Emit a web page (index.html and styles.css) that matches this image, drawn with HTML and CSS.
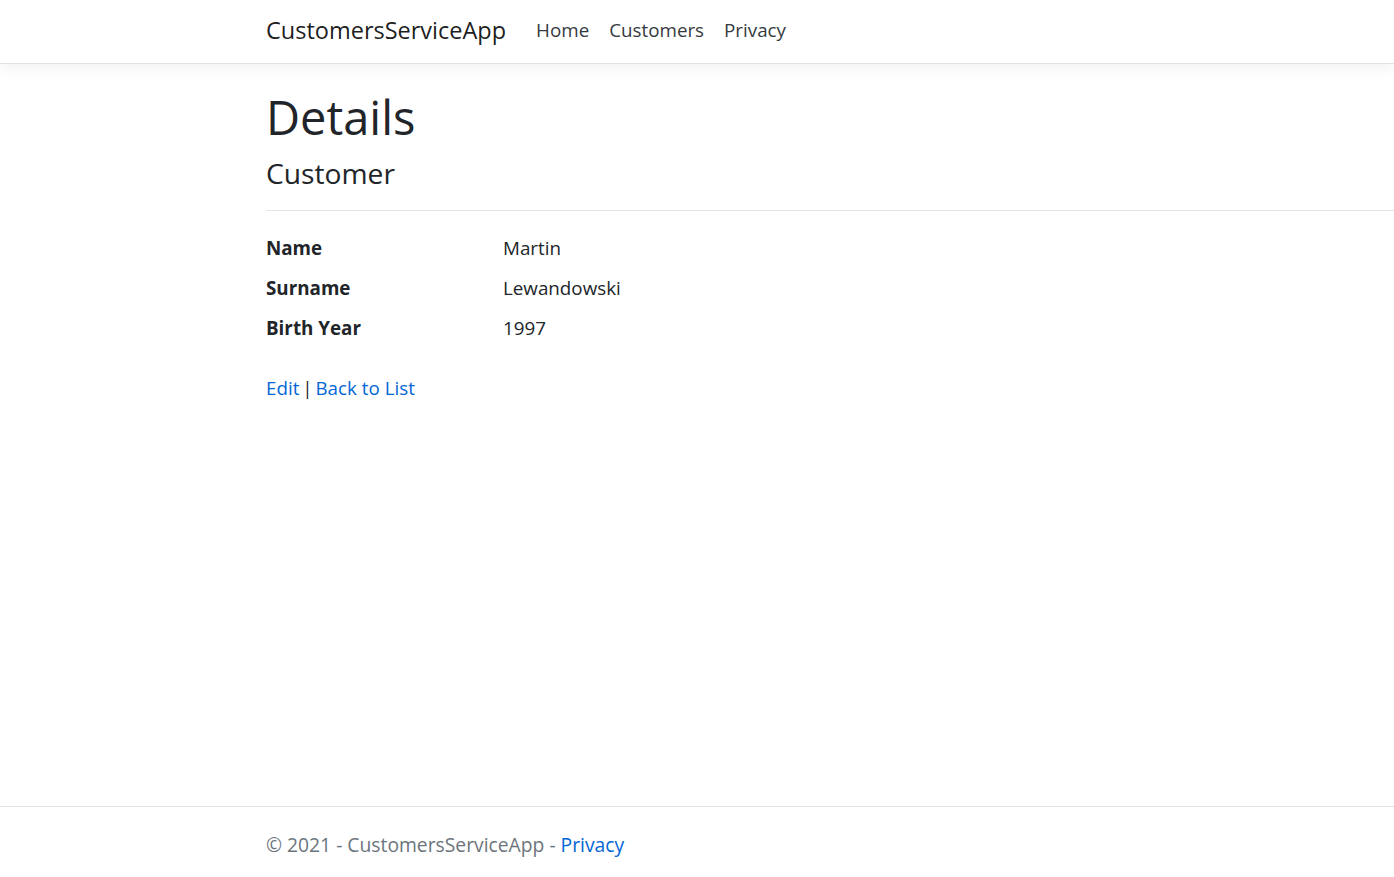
FILE: index.html
```html
<!DOCTYPE html>
<html lang="en">
<head>
<meta charset="utf-8">
<title>Details - CustomersServiceApp</title>
<link rel="stylesheet" href="styles.css">
</head>
<body>
<div class="page">
  <header class="navbar">
    <nav class="nav-inner">
      <a class="brand" href="#">CustomersServiceApp</a>
      <ul class="nav-list">
        <li><a class="nav-link" href="#">Home</a></li>
        <li><a class="nav-link" href="#">Customers</a></li>
        <li><a class="nav-link" href="#">Privacy</a></li>
      </ul>
    </nav>
  </header>
  <main class="main">
    <h1 class="title">Details</h1>
    <div class="details">
      <h4 class="subtitle">Customer</h4>
      <hr class="divider">
      <dl class="fields">
        <dt class="field-name">Name</dt>
        <dd class="field-value">Martin</dd>
        <dt class="field-name">Surname</dt>
        <dd class="field-value">Lewandowski</dd>
        <dt class="field-name">Birth Year</dt>
        <dd class="field-value">1997</dd>
      </dl>
    </div>
    <div class="actions">
      <a class="link action-link" href="#">Edit</a> | <a class="link action-link" href="#">Back to List</a>
    </div>
  </main>
  <footer class="footer">
    <div class="footer-inner">&copy; 2021 - CustomersServiceApp - <a class="link" href="#">Privacy</a></div>
  </footer>
</div>
</body>
</html>
```
FILE: styles.css
```css
html, body {
  margin: 0;
  padding: 0;
  overflow: hidden;
}
body {
  font-family: "Open Sans", "Noto Sans", sans-serif;
  font-size: 18.8px;
  line-height: 30px;
  color: #212529;
  background: #fff;
}
.page {
  display: flex;
  flex-direction: column;
  height: 877px;
  overflow: hidden;
}
.navbar {
  flex: none;
  height: 63px;
  background: #fff;
  border-bottom: 1px solid #dee2e6;
  box-shadow: 0 5px 15px rgba(0, 0, 0, 0.05);
  position: relative;
  z-index: 1;
}
.nav-inner {
  display: flex;
  align-items: center;
  padding: 15px 0 0 266px;
}
.brand {
  font-size: 23.5px;
  line-height: 30px;
  color: rgba(0, 0, 0, 0.9);
  text-decoration: none;
  margin-right: 20px;
}
.nav-list {
  display: flex;
  list-style: none;
  margin: 0;
  padding: 0;
}
.nav-link {
  display: block;
  padding: 0 10px;
  line-height: 30px;
  color: #343a40;
  text-decoration: none;
}
.main {
  flex: 1;
  padding: 23px 0 0 266px;
}
.title {
  font-size: 47px;
  line-height: 60px;
  font-weight: 400;
  margin: 0 0 8px;
}
.subtitle {
  font-size: 28.2px;
  line-height: 36px;
  font-weight: 400;
  margin: 0;
}
.divider {
  border: 0;
  border-top: 1px solid #e5e5e5;
  margin: 19px 0 22px;
}
.fields {
  display: grid;
  grid-template-columns: 237px 1fr;
  margin: 0 0 20px;
}
.field-name {
  font-weight: 700;
  margin: 0 0 10px;
}
.field-value {
  margin: 0 0 10px;
}
.actions {
  word-spacing: -2px;
}
.action-link {
  word-spacing: normal;
}
.link {
  color: #0366d6;
  text-decoration: none;
}
.footer {
  flex: none;
  height: 70px;
  border-top: 1px solid #dee2e6;
  line-height: 75px;
  font-size: 19.3px;
  color: #6c757d;
  white-space: nowrap;
}
.footer-inner {
  padding-left: 266px;
}
```
